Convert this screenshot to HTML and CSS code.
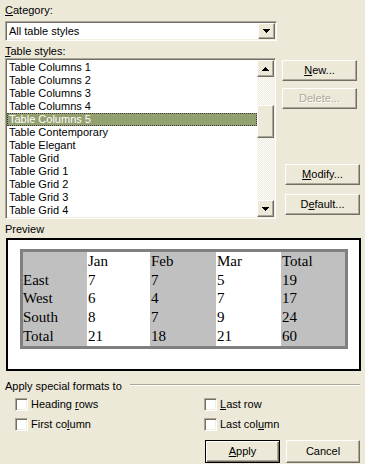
FILE: index.html
```html
<!DOCTYPE html>
<html>
<head>
<meta charset="utf-8">
<link rel="stylesheet" href="styles.css">
</head>
<body>
<div class="dlg">
  <div class="lbl l-cat"><u>C</u>ategory:</div>
  <div class="combo sunken">
    <span class="combo-text">All table styles</span>
    <span class="dd-btn raised"><svg width="7" height="4" viewBox="0 0 7 4"><path d="M0 0h7v1H0zM1 1h5v1H1zM2 2h3v1H2zM3 3h1v1H3z" fill="#000"/></svg></span>
  </div>
  <div class="lbl l-ts"><u>T</u>able styles:</div>
  <div class="row-list">
    <div class="list sunken">
      <ul class="items">
        <li>Table Columns 1</li>
        <li>Table Columns 2</li>
        <li>Table Columns 3</li>
        <li>Table Columns 4</li>
        <li class="sel">Table Columns 5</li>
        <li>Table Contemporary</li>
        <li>Table Elegant</li>
        <li>Table Grid</li>
        <li>Table Grid 1</li>
        <li>Table Grid 2</li>
        <li>Table Grid 3</li>
        <li>Table Grid 4</li>
      </ul>
      <div class="vscroll">
        <div class="sb-btn raised"><svg width="7" height="4" viewBox="0 0 7 4"><path d="M3 0h1v1H3zM2 1h3v1H2zM1 2h5v1H1zM0 3h7v1H0z" fill="#000"/></svg></div>
        <div class="track"><div class="thumb raised"></div></div>
        <div class="sb-btn raised"><svg width="7" height="4" viewBox="0 0 7 4"><path d="M0 0h7v1H0zM1 1h5v1H1zM2 2h3v1H2zM3 3h1v1H3z" fill="#000"/></svg></div>
      </div>
    </div>
    <div class="side">
      <button class="btn raised b-new"><u>N</u>ew...</button>
      <button class="btn raised b-del disabled">Delete...</button>
      <button class="btn raised b-mod"><u>M</u>odify...</button>
      <button class="btn raised b-def">D<u>e</u>fault...</button>
    </div>
  </div>
  <div class="lbl l-prev">Preview</div>
  <div class="preview">
    <table class="ptable">
      <colgroup><col class="c1"><col class="c2"><col class="c3"><col class="c4"><col class="c5"></colgroup>
      <tr><td class="g"></td><td>Jan</td><td class="g">Feb</td><td>Mar</td><td class="g">Total</td></tr>
      <tr><td class="g first">East</td><td>7</td><td class="g">7</td><td>5</td><td class="g">19</td></tr>
      <tr><td class="g first">West</td><td>6</td><td class="g">4</td><td>7</td><td class="g">17</td></tr>
      <tr><td class="g first">South</td><td>8</td><td class="g">7</td><td>9</td><td class="g">24</td></tr>
      <tr><td class="g first">Total</td><td>21</td><td class="g">18</td><td>21</td><td class="g">60</td></tr>
    </table>
  </div>
  <div class="group-head"><span>Apply special formats to</span><span class="etch"></span></div>
  <div class="checks">
    <div class="chk"><span class="box"></span><span>Heading <u>r</u>ows</span></div>
    <div class="chk"><span class="box"></span><span><u>L</u>ast row</span></div>
    <div class="chk"><span class="box"></span><span>First co<u>l</u>umn</span></div>
    <div class="chk"><span class="box"></span><span>Last col<u>u</u>mn</span></div>
  </div>
  <div class="footer">
    <button class="btn default b-apply"><u>A</u>pply</button>
    <button class="btn raised b-cancel">Cancel</button>
  </div>
</div>
</body>
</html>
```
FILE: styles.css
```css
* { box-sizing: border-box; }
body {
  margin: 0;
  width: 365px;
  height: 464px;
  overflow: hidden;
  background: #ECE9D8;
  font: 11px/13px "Liberation Sans", Arial, sans-serif;
  color: #000;
}
u { text-decoration: underline; }
.dlg { padding: 0 5px; display: flex; flex-direction: column; }
.lbl { height: 13px; }
.l-cat { margin-top: 4px; }
.l-ts { margin-top: 4px; }
.l-prev { margin-top: 4px; }

.sunken {
  border: 1px solid;
  border-color: #ACA899 #fff #fff #ACA899;
  box-shadow: inset 1px 1px #716F64, inset -1px -1px #F1EFE2;
  background: #fff;
}
.raised {
  background: #ECE9D8;
  border: 1px solid;
  border-color: #fff #716F64 #716F64 #fff;
  box-shadow: inset -1px -1px #ACA899;
}

.combo {
  margin-top: 4px;
  width: 272px;
  height: 20px;
  padding: 1px;
  display: flex;
  align-items: center;
}
.combo-text { flex: 1; padding-left: 2px; }
.dd-btn {
  width: 17px;
  height: 16px;
  display: flex;
  align-items: center;
  justify-content: center;
}
svg { display: block; }

.row-list { display: flex; }
.list {
  width: 272px;
  height: 161px;
  padding: 1px;
  display: flex;
}
.items {
  flex: 1;
  list-style: none;
  margin: 0;
  padding: 1px 0 0;
}
.items li {
  height: 13px;
  padding-left: 2px;
  white-space: nowrap;
}
.items li.sel {
  background: #93A070;
  color: #fff;
  outline: 1px dotted #3a3a3a;
  outline-offset: -1px;
}
.vscroll { width: 17px; display: flex; flex-direction: column; }
.sb-btn {
  height: 17px;
  flex: none;
  display: flex;
  align-items: center;
  justify-content: center;
}
.track {
  flex: 1;
  background: repeating-conic-gradient(#ECE9D8 0 25%, #fff 0 50%) 0 0 / 2px 2px;
}
.thumb { height: 33px; margin-top: 28px; }

.side { margin-left: 6px; display: flex; flex-direction: column; align-items: flex-start; }
.btn {
  appearance: none;
  -webkit-appearance: none;
  font: inherit;
  color: #000;
  padding: 0;
  margin: 0;
  width: 75px;
  height: 21px;
  text-align: center;
}
.b-new { margin-top: 2px; }
.b-del { margin-top: 7px; }
.b-mod { margin-top: 55px; margin-left: 3px; }
.b-def { margin-top: 9px; margin-left: 3px; }
.disabled { color: #ACA899; text-shadow: 1px 1px #fff; }

.preview {
  margin: 2px 0 0 1px;
  width: 355px;
  height: 133px;
  border: 2px solid #000;
  background: #fff;
  padding: 9px 0 0 12px;
}
.ptable {
  border-collapse: separate;
  border-spacing: 0;
  border: 3px solid #808080;
  table-layout: fixed;
  width: 328px;
  font: 15px/18.7px "Liberation Serif", "Times New Roman", serif;
}
.c1 { width: 64px; }
.c2 { width: 63px; }
.c3 { width: 66px; }
.c4 { width: 65px; }
.c5 { width: 64px; }
.ptable td {
  padding: 0 0 0 1px;
  height: 18.7px;
  vertical-align: top;
  background: #fff;
  white-space: nowrap;
}
.ptable td.g { background: #C0C0C0; }
.ptable td.first { padding-left: 0; }

.group-head { margin-top: 9px; display: flex; height: 13px; }
.etch {
  flex: 1;
  margin: 4px 0 0 8px;
  height: 2px;
  border-top: 1px solid #ACA899;
  border-bottom: 1px solid #fff;
}

.checks {
  margin: 5px 0 0 10px;
  display: grid;
  grid-template-columns: 189px auto;
  row-gap: 7px;
}
.chk { display: flex; align-items: center; gap: 3px; height: 13px; }
.box {
  width: 13px;
  height: 13px;
  background: #fff;
  border: 1px solid;
  border-color: #ACA899 #fff #fff #ACA899;
  box-shadow: inset 1px 1px #716F64, inset -1px -1px #F1EFE2;
}

.footer { margin-top: 9px; display: flex; padding-left: 200px; gap: 6px; }
.footer .btn { height: 23px; }
.b-apply { width: 75px; }
.b-cancel { width: 74px; }
.default {
  background: #ECE9D8;
  border: 1px solid #000;
  box-shadow: inset 1px 1px #fff, inset -1px -1px #716F64, inset -2px -2px #ACA899;
}
```
